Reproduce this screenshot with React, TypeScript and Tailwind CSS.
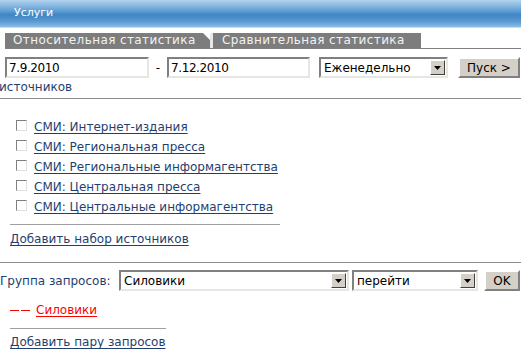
const font = { fontFamily: '"DejaVu Sans", Verdana, sans-serif' };

function Input({ value, w }: { value: string; w: string }) {
  return (
    <div
      className={`${w} h-[21px] bg-white border-2 border-t-[#808080] border-l-[#808080] border-b-[#e8e6e0] border-r-[#e8e6e0] flex items-center px-[2px] text-[12px] text-black tracking-[-0.4px]`}
    >
      {value}
    </div>
  );
}

function Select({ value, w }: { value: string; w: string }) {
  return (
    <div
      className={`${w} h-[21px] bg-white border-2 border-t-[#808080] border-l-[#808080] border-b-[#e8e6e0] border-r-[#e8e6e0] flex items-center text-[12px] text-black`}
    >
      <span className="flex-1 pl-[3px] truncate">{value}</span>
      <span className="w-[15px] h-[15px] mr-[1px] bg-[#d4d0c8] border border-t-white border-l-white border-b-[#404040] border-r-[#404040] flex items-center justify-center">
        <svg width="7" height="4" viewBox="0 0 7 4">
          <path d="M0 0h7L3.5 4z" fill="#000" />
        </svg>
      </span>
    </div>
  );
}

function Btn({ label, w }: { label: string; w: string }) {
  return (
    <div
      className={`${w} h-[21px] bg-[#d4d0c8] border-2 border-t-white border-l-white border-b-[#808080] border-r-[#808080] flex items-center justify-center text-[12px] text-black`}
    >
      {label}
    </div>
  );
}

const sources = [
  "СМИ: Интернет-издания",
  "СМИ: Региональная пресса",
  "СМИ: Региональные информагентства",
  "СМИ: Центральная пресса",
  "СМИ: Центральные информагентства",
];

const link = "text-[12px] text-[#1f3f6f] underline underline-offset-2";

export default function App() {
  return (
    <div className="w-[521px] h-[362px] bg-white overflow-hidden" style={font}>
      <div className="h-[28px] bg-[linear-gradient(#b4d4ee,#6aa6d8_35%,#3f86c4_55%,#5c9ad2_80%,#8cbce4)] border-b border-[#c8def0] flex items-center pl-[14px] text-white text-[11px]">
        Услуги
      </div>

      <div className="mt-[5px] ml-[5px] flex items-end border-b border-[#808080] h-[16px]">
        <div className="relative w-[205px] h-[15px] bg-[#7d7d7d] text-[#f2f2f2] text-[12px] leading-[15px] pl-[8px] tracking-[0.4px]">
          Относительная статистика
          <span className="absolute right-0 top-0 w-0 h-0 border-t-[7px] border-t-white border-l-[7px] border-l-transparent" />
        </div>
        <div className="w-[3px] h-[15px] bg-[#e8e8e8]" />
        <div className="w-[208px] h-[15px] bg-[#7d7d7d] text-[#f2f2f2] text-[12px] leading-[15px] pl-[9px] tracking-[0.4px]">
          Сравнительная статистика
        </div>
      </div>

      <div className="mt-[8px] ml-[5px] flex items-center">
        <Input value="7.9.2010" w="w-[144px]" />
        <span className="w-[18px] text-center text-[12px]">-</span>
        <Input value="7.12.2010" w="w-[143px]" />
        <div className="w-[9px]" />
        <Select value="Еженедельно" w="w-[129px]" />
        <div className="w-[10px]" />
        <Btn label="Пуск >" w="w-[62px]" />
      </div>

      <div className="ml-[-1px] mt-[1px] h-[16px] flex items-center text-[12px] text-[#1f3f6f]">источников</div>

      <div className="mt-[3px] border-t border-[#8c8c8c]" />

      <div className="mt-[18px] ml-[16px] flex flex-col">
        {sources.map((s) => (
          <div key={s} className="flex items-center h-[20px]">
            <span className="w-[11px] h-[11px] mb-[3px] border border-t-[#808080] border-l-[#808080] border-b-[#e0e0e0] border-r-[#e0e0e0] bg-white mr-[7px]" />
            <a className={link}>{s}</a>
          </div>
        ))}
      </div>

      <div className="mt-[7px] ml-[10px] w-[270px] border-t border-[#a0a0a0]" />
      <div className={`mt-[6px] ml-[10px] h-[16px] flex items-center ${link}`}>Добавить набор источников</div>

      <div className="mt-[15px] border-t border-[#8c8c8c]" />

      <div className="mt-[7px] flex items-center">
        <span className="text-[12px] text-[#1f3f6f] w-[119px]">Группа запросов:</span>
        <Select value="Силовики" w="w-[230px]" />
        <div className="w-[3px]" />
        <Select value="перейти" w="w-[126px]" />
        <div className="w-[6px]" />
        <Btn label="OK" w="w-[36px]" />
      </div>

      <div className="mt-[11px] ml-[10px] h-[16px] flex items-center text-[12px]">
        <span className="text-[#ff0000] mr-[4px] flex gap-[2px]">
          <span className="w-[9px] border-t border-[#ff0000]" />
          <span className="w-[9px] border-t border-[#ff0000]" />
        </span>
        <a className="text-[#ff0000] underline underline-offset-2 ml-[2px]">Силовики</a>
      </div>

      <div className="mt-[10px] ml-[10px] w-[156px] border-t border-[#a0a0a0]" />
      <div className={`mt-[5px] ml-[10px] h-[16px] flex items-center ${link}`}>Добавить пару запросов</div>
    </div>
  );
}
